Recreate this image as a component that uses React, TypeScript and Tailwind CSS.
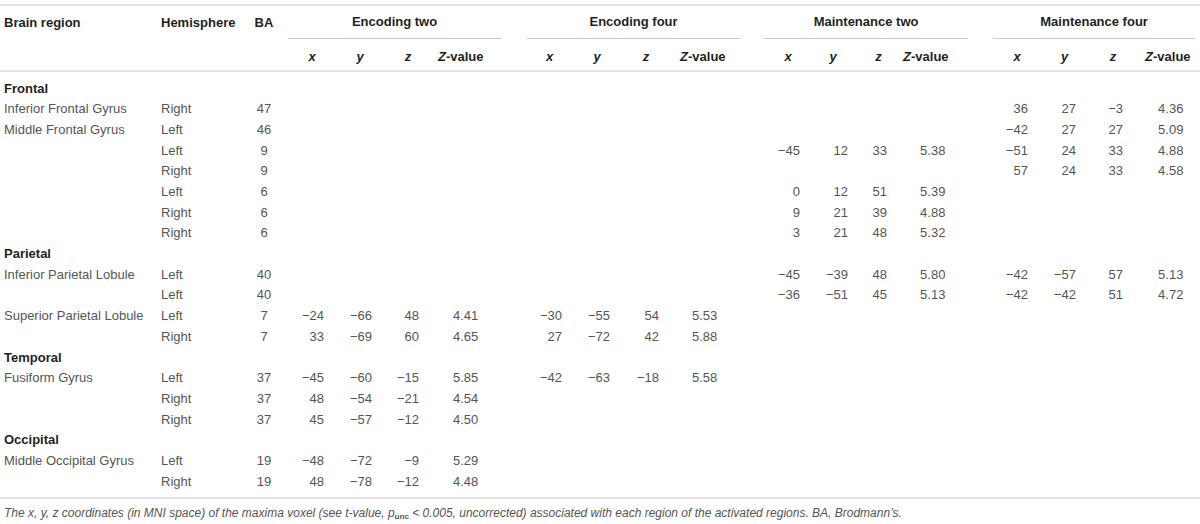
import React from 'react';

type Vals = [string, string, string, string];

type Row = {
  section?: string;
  region?: string;
  hemi?: string;
  ba?: string;
  e2?: Vals;
  e4?: Vals;
  m2?: Vals;
  m4?: Vals;
};

type Col = { w: string; head: string; data: string };

type Group = { key: 'e2' | 'e4' | 'm2' | 'm4'; title: string; line: string; cols: Col[] };

const groups: Group[] = [
  {
    key: 'e2',
    title: 'Encoding two',
    line: 'mr-[26px]',
    cols: [
      { w: 'w-[48px]', head: 'text-center', data: 'text-right pr-[12px]' },
      { w: 'w-[48px]', head: 'text-center', data: 'text-right pr-[12px]' },
      { w: 'w-[48px]', head: 'text-center', data: 'text-right pr-[13px]' },
      { w: 'w-[95px]', head: 'text-left pl-[6px]', data: 'text-left pl-[21px]' },
    ],
  },
  {
    key: 'e4',
    title: 'Encoding four',
    line: 'mr-[24px]',
    cols: [
      { w: 'w-[45px]', head: 'text-center', data: 'text-right pr-[10px]' },
      { w: 'w-[50px]', head: 'text-center', data: 'text-right pr-[12px]' },
      { w: 'w-[48px]', head: 'text-center', data: 'text-right pr-[11px]' },
      { w: 'w-[94px]', head: 'text-left pl-[10px]', data: 'text-left pl-[22px]' },
    ],
  },
  {
    key: 'm2',
    title: 'Maintenance two',
    line: 'mr-[25px]',
    cols: [
      { w: 'w-[48px]', head: 'text-center', data: 'text-right pr-[12px]' },
      { w: 'w-[42px]', head: 'text-center', data: 'text-right pr-[6px]' },
      { w: 'w-[49px]', head: 'text-center', data: 'text-right pr-[16px]' },
      { w: 'w-[90px]', head: 'text-left pl-[0px]', data: 'text-left pl-[17px]' },
    ],
  },
  {
    key: 'm4',
    title: 'Maintenance four',
    line: 'mr-[5px]',
    cols: [
      { w: 'w-[48px]', head: 'text-center', data: 'text-right pr-[13px]' },
      { w: 'w-[47px]', head: 'text-center', data: 'text-right pr-[12px]' },
      { w: 'w-[50px]', head: 'text-center', data: 'text-right pr-[15px]' },
      { w: 'w-[62px]', head: 'text-left pl-[7px]', data: 'text-left pl-[20px]' },
    ],
  },
];

const rows: Row[] = [
  { section: 'Frontal' },
  { region: 'Inferior Frontal Gyrus', hemi: 'Right', ba: '47', m4: ['36', '27', '−3', '4.36'] },
  { region: 'Middle Frontal Gyrus', hemi: 'Left', ba: '46', m4: ['−42', '27', '27', '5.09'] },
  { hemi: 'Left', ba: '9', m2: ['−45', '12', '33', '5.38'], m4: ['−51', '24', '33', '4.88'] },
  { hemi: 'Right', ba: '9', m4: ['57', '24', '33', '4.58'] },
  { hemi: 'Left', ba: '6', m2: ['0', '12', '51', '5.39'] },
  { hemi: 'Right', ba: '6', m2: ['9', '21', '39', '4.88'] },
  { hemi: 'Right', ba: '6', m2: ['3', '21', '48', '5.32'] },
  { section: 'Parietal' },
  {
    region: 'Inferior Parietal Lobule',
    hemi: 'Left',
    ba: '40',
    m2: ['−45', '−39', '48', '5.80'],
    m4: ['−42', '−57', '57', '5.13'],
  },
  { hemi: 'Left', ba: '40', m2: ['−36', '−51', '45', '5.13'], m4: ['−42', '−42', '51', '4.72'] },
  {
    region: 'Superior Parietal Lobule',
    hemi: 'Left',
    ba: '7',
    e2: ['−24', '−66', '48', '4.41'],
    e4: ['−30', '−55', '54', '5.53'],
  },
  { hemi: 'Right', ba: '7', e2: ['33', '−69', '60', '4.65'], e4: ['27', '−72', '42', '5.88'] },
  { section: 'Temporal' },
  {
    region: 'Fusiform Gyrus',
    hemi: 'Left',
    ba: '37',
    e2: ['−45', '−60', '−15', '5.85'],
    e4: ['−42', '−63', '−18', '5.58'],
  },
  { hemi: 'Right', ba: '37', e2: ['48', '−54', '−21', '4.54'] },
  { hemi: 'Right', ba: '37', e2: ['45', '−57', '−12', '4.50'] },
  { section: 'Occipital' },
  { region: 'Middle Occipital Gyrus', hemi: 'Left', ba: '19', e2: ['−48', '−72', '−9', '5.29'] },
  { hemi: 'Right', ba: '19', e2: ['48', '−78', '−12', '4.48'] },
];

const axes = ['x', 'y', 'z'];

export default function App() {
  return (
    <div className="w-[1200px] h-[524px] bg-white pt-[4px] font-['Liberation_Sans',Arial,sans-serif] overflow-hidden">
      <table className="w-[1200px] table-fixed border-collapse border-t-2 border-[#e4e4e4]">
        <colgroup>
          <col className="w-[157px]" />
          <col className="w-[85px]" />
          <col className="w-[46px]" />
          {groups.map((g) => g.cols.map((c, i) => <col key={g.key + i} className={c.w} />))}
        </colgroup>
        <thead className="text-[13px] font-bold text-[#1f1f1f]">
          <tr className="h-[33px]">
            <th className="text-left pl-[4px] font-bold">Brain region</th>
            <th className="text-left pl-[4px] font-bold">Hemisphere</th>
            <th className="text-center font-bold pr-[2px]">BA</th>
            {groups.map((g) => (
              <th key={g.key} colSpan={4} className="p-0 align-bottom font-bold">
                <div className={`h-[33px] flex items-center justify-center border-b border-[#c9c9c9] ${g.line}`}>
                  {g.title}
                </div>
              </th>
            ))}
          </tr>
          <tr className="h-[32px] border-b-2 border-[#e4e4e4]">
            <th />
            <th />
            <th />
            {groups.map((g) =>
              g.cols.map((c, i) => (
                <th key={g.key + i} className={`${c.head} pt-[5px] font-bold whitespace-nowrap`}>
                  {i < 3 ? (
                    <i>{axes[i]}</i>
                  ) : (
                    <>
                      <i>Z</i>-value
                    </>
                  )}
                </th>
              ))
            )}
          </tr>
        </thead>
        <tbody className="text-[13px] text-[#555555]">
          <tr className="h-[7px]">
            <td colSpan={19} />
          </tr>
          {rows.map((r, idx) =>
            r.section ? (
              <tr key={idx} className="h-[20.7px]">
                <td colSpan={19} className="pl-[4px] font-bold text-[#1f1f1f]">
                  {r.section}
                </td>
              </tr>
            ) : (
              <tr key={idx} className="h-[20.7px]">
                <td className="pl-[4px] whitespace-nowrap">{r.region ?? ''}</td>
                <td className="pl-[4px]">{r.hemi}</td>
                <td className="text-center pr-[2px]">{r.ba}</td>
                {groups.map((g) =>
                  g.cols.map((c, i) => (
                    <td key={g.key + i} className={`${c.data} whitespace-nowrap`}>
                      {r[g.key]?.[i] ?? ''}
                    </td>
                  ))
                )}
              </tr>
            )
          )}
          <tr className="h-[6px] border-b-2 border-[#e4e4e4]">
            <td colSpan={19} />
          </tr>
        </tbody>
      </table>
      <p className="pl-[4px] pt-[5px] text-[12px] italic text-[#555555] whitespace-nowrap">
        The x, y, z coordinates (in MNI space) of the maxima voxel (see t-value, p
        <sub className="not-italic font-bold text-[8px]">unc</sub> &lt; 0.005, uncorrected) associated with each
        region of the activated regions. BA, Brodmann’s.
      </p>
    </div>
  );
}
